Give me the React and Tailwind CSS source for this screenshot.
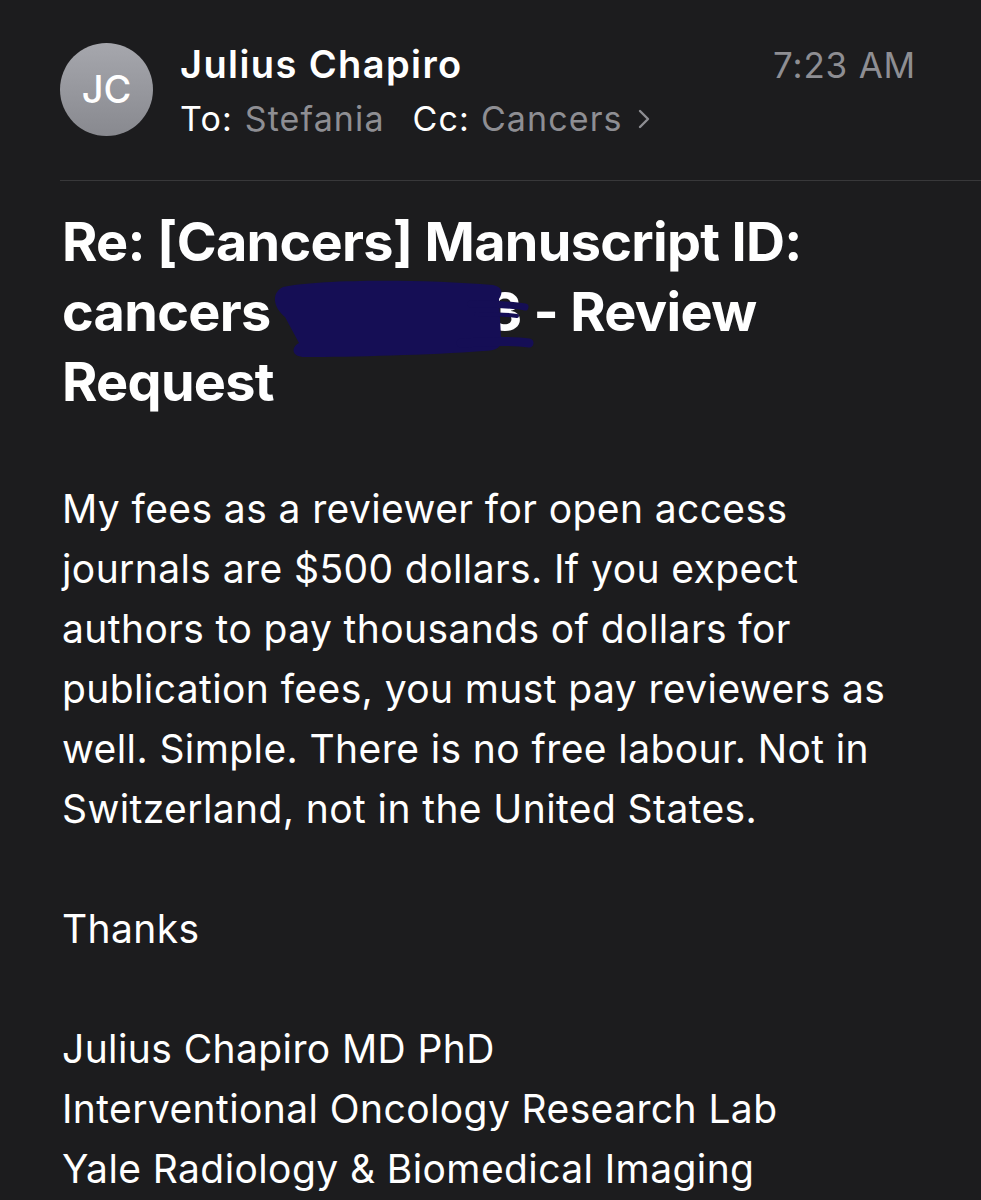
const body = [
  "My fees as a reviewer for open access",
  "journals are $500 dollars. If you expect",
  "authors to pay thousands of dollars for",
  "publication fees, you must pay reviewers as",
  "well. Simple. There is no free labour. Not in",
  "Switzerland, not in the United States.",
];

const signature = [
  "Julius Chapiro MD PhD",
  "Interventional Oncology Research Lab",
  "Yale Radiology & Biomedical Imaging",
];

function Chevron() {
  return (
    <svg className="ml-[14px]" width="14" height="20" viewBox="0 0 14 20" fill="none">
      <path d="M3 2l8 8-8 8" stroke="#8e8e93" strokeWidth="2.4" strokeLinecap="round" strokeLinejoin="round" />
    </svg>
  );
}

function Scribble() {
  return (
    <svg className="absolute left-0 top-0 overflow-visible" width="262" height="82" viewBox="0 0 262 82" fill="none">
      <path
        d="M12 10 C50 2 150 2 222 8 C232 10 232 16 228 22 L230 60 C232 70 226 74 212 74 C160 78 80 80 34 80 C20 80 20 70 28 66 L14 40 C2 30 0 16 12 10 Z"
        fill="#150e55"
      />
      <path d="M200 27 C225 27 244 28 254 30" stroke="#150e55" strokeWidth="7" strokeLinecap="round" />
      <path d="M205 37 C225 37 240 38 246 39" stroke="#150e55" strokeWidth="4" strokeLinecap="round" />
      <path d="M190 66 C220 64 245 64 258 66" stroke="#150e55" strokeWidth="9" strokeLinecap="round" />
    </svg>
  );
}

export default function App() {
  return (
    <div
      className="w-[981px] h-[1200px] overflow-hidden bg-[#1c1c1e] text-white"
      style={{ fontFamily: "Inter, 'Noto Sans', sans-serif" }}
    >
      <div className="flex items-start pl-[60px] pt-[39px] pr-[65px]">
        <div className="mt-[4px] w-[93px] h-[93px] rounded-full bg-gradient-to-b from-[#a6a7ad] to-[#88898f] flex items-center justify-center text-[38px] font-medium">
          JC
        </div>
        <div className="ml-[27px] flex-1">
          <div className="flex justify-between items-baseline">
            <div className="text-[38px] font-semibold leading-[50px] tracking-[1.4px]">Julius Chapiro</div>
            <div className="text-[35px] text-[#8e8e93] leading-[50px] tracking-[0.8px]">7:23 AM</div>
          </div>
          <div className="mt-[4px] text-[34px] leading-[50px] tracking-[1.1px] flex items-center">
            <span>To:</span>
            <span className="ml-[12px] text-[#8e8e93]">Stefania</span>
            <span className="ml-[28px]">Cc:</span>
            <span className="ml-[11px] text-[#8e8e93]">Cancers</span>
            <Chevron />
          </div>
        </div>
      </div>

      <div className="ml-[60px] mt-[36px] h-px bg-[#38383a]"></div>

      <div className="pl-[62px] pt-[26px] text-[54px] font-bold leading-[70px] tracking-[-0.7px] whitespace-nowrap">
        <div>Re: [Cancers] Manuscript ID:</div>
        <div className="flex items-start">
          <span>cancers</span>
          <span className="relative inline-block w-[258px] h-[70px]">
            <span className="absolute right-[7px] top-0">3</span>
            <Scribble />
          </span>
          <span className="ml-[5px]">- Review</span>
        </div>
        <div>Request</div>
      </div>

      <div className="pl-[62px] pt-[62px] text-[39px] leading-[60px] tracking-[0.4px] whitespace-nowrap">
        {body.map((line) => (
          <div key={line}>{line}</div>
        ))}
        <div className="mt-[60px]">Thanks</div>
        <div className="mt-[60px]">
          {signature.map((line) => (
            <div key={line}>{line}</div>
          ))}
        </div>
      </div>
    </div>
  );
}
